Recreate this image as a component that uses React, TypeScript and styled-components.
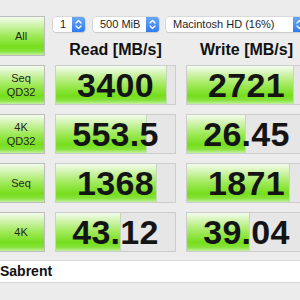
import React from 'react';
import styled, { createGlobalStyle } from 'styled-components';

const GlobalStyle = createGlobalStyle`
  html, body {
    margin: 0;
    padding: 0;
    background: #ececec;
    overflow: hidden;
  }
  body {
    font-family: "Liberation Sans", Arial, sans-serif;
    color: #222;
  }
`;

const greenGradient = `linear-gradient(to bottom,
  #f4fcef 0%,
  #d2f4b0 20%,
  #9fe958 50%,
  #76de1c 78%,
  #86e23a 90%,
  #c4f1a0 100%)`;

const Window = styled.div`
  width: 300px;
  height: 300px;
  overflow: hidden;
  padding-top: 16px;
  box-sizing: border-box;
`;

const Grid = styled.div`
  display: grid;
  grid-template-columns: 50px 121px 121px;
  grid-auto-rows: 40px;
  column-gap: 10px;
  row-gap: 9px;
  margin-left: -5px;
`;

const SideButton = styled.div`
  box-sizing: border-box;
  border: 1px solid #bcbcbc;
  background: ${greenGradient};
  display: flex;
  align-items: center;
  justify-content: center;
  text-align: center;
  font-size: 11px;
  line-height: 14px;
  color: #262626;
  padding-left: 2px;
`;

const TopBlock = styled.div`
  grid-column: 2 / 4;
  display: flex;
  flex-direction: column;
`;

const Controls = styled.div`
  display: flex;
  align-items: center;
  margin: 1px 0 0 -2px;
  height: 15px;
`;

const Select = styled.div<{ w: number; gap?: number }>`
  box-sizing: border-box;
  width: ${({ w }) => w}px;
  height: 15px;
  margin-right: ${({ gap }) => gap ?? 0}px;
  flex-shrink: 0;
  display: flex;
  background: #fff;
  border-radius: 3px;
  box-shadow: 0 0 0 0.5px #c6c6c6, 0 1px 1px rgba(0, 0, 0, 0.12);
  overflow: hidden;
`;

const SelectText = styled.div`
  flex: 1;
  font-size: 11px;
  line-height: 15px;
  padding-left: 7px;
  color: #1e1e1e;
  white-space: nowrap;
  overflow: hidden;
`;

const Arrows = styled.div`
  width: 13px;
  flex-shrink: 0;
  background: linear-gradient(to bottom, #6aa8f7, #2f7cf2);
  display: flex;
  align-items: center;
  justify-content: center;
`;

const HeaderRow = styled.div`
  display: grid;
  grid-template-columns: 121px 121px;
  column-gap: 10px;
  margin-top: 8px;
`;

const HeaderText = styled.div`
  text-align: center;
  font-weight: bold;
  font-size: 16px;
  line-height: 20px;
  color: #111;
  white-space: nowrap;
`;

const Cell = styled.div`
  position: relative;
  box-sizing: border-box;
  border: 1px solid #cdcdcd;
  background: #e6e6e6;
  overflow: hidden;
`;

const Fill = styled.div`
  position: absolute;
  left: 0;
  top: 0;
  bottom: 0;
  background: ${greenGradient};
  border-right: 1px solid #c6d8bb;
`;

const Value = styled.div`
  position: relative;
  height: 100%;
  display: flex;
  align-items: center;
  justify-content: center;
  font-weight: bold;
  font-size: 34px;
  letter-spacing: 0.3px;
  color: #141414;
`;

const NameField = styled.div`
  margin-top: 8px;
  height: 23px;
  background: #fff;
  border-top: 1px solid #dcdcdc;
  border-bottom: 1px solid #d6d6d6;
  box-sizing: border-box;
  font-weight: bold;
  font-size: 14px;
  line-height: 21px;
  color: #111;
`;

const UpDown = () => (
  <svg width="9" height="11" viewBox="0 0 9 11">
    <path d="M2 4 L4.5 1.5 L7 4 M2 7 L4.5 9.5 L7 7" fill="none" stroke="#fff" strokeWidth="1.3" strokeLinecap="round" strokeLinejoin="round" />
  </svg>
);

const rows = [
  { label: ['Seq', 'QD32'], read: '3400', readW: 110, write: '2721', writeW: 106 },
  { label: ['4K', 'QD32'], read: '553.5', readW: 90, write: '26.45', writeW: 58 },
  { label: ['Seq'], read: '1368', readW: 100, write: '1871', writeW: 102 },
  { label: ['4K'], read: '43.12', readW: 64, write: '39.04', writeW: 62 },
];

export default function App() {
  return (
    <Window>
      <GlobalStyle />
      <Grid>
        <SideButton>All</SideButton>
        <TopBlock>
          <Controls>
            <Select w={32} gap={8}>
              <SelectText>1</SelectText>
              <Arrows><UpDown /></Arrows>
            </Select>
            <Select w={66} gap={7}>
              <SelectText>500 MiB</SelectText>
              <Arrows><UpDown /></Arrows>
            </Select>
            <Select w={140}>
              <SelectText>Macintosh HD (16%)</SelectText>
              <Arrows><UpDown /></Arrows>
            </Select>
          </Controls>
          <HeaderRow>
            <HeaderText>Read [MB/s]</HeaderText>
            <HeaderText>Write [MB/s]</HeaderText>
          </HeaderRow>
        </TopBlock>
        {rows.map((r) => (
          <React.Fragment key={r.label.join(' ') + r.read}>
            <SideButton>
              <div>
                {r.label.map((l) => (
                  <div key={l}>{l}</div>
                ))}
              </div>
            </SideButton>
            <Cell>
              <Fill style={{ width: r.readW }} />
              <Value>{r.read}</Value>
            </Cell>
            <Cell>
              <Fill style={{ width: r.writeW }} />
              <Value>{r.write}</Value>
            </Cell>
          </React.Fragment>
        ))}
      </Grid>
      <NameField>Sabrent</NameField>
    </Window>
  );
}
